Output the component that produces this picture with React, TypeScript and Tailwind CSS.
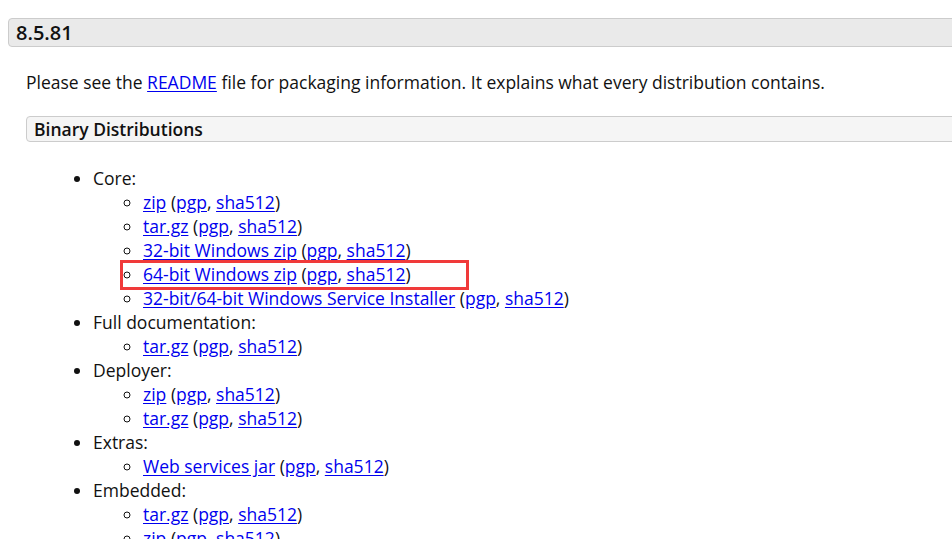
const link = "text-[#0000ee] underline underline-offset-2";

function Sigs() {
    return (
        <>
            {" "}(<a className={link}>pgp</a>, <a className={link}>sha512</a>)
        </>
    );
}

function Item({ label, boxed = false }: { label: string; boxed?: boolean }) {
    return (
        <li className="relative">
            <a className={link}>{label}</a>
            <Sigs />
            {boxed && (
                <span className="absolute left-[-23px] top-[-2px] w-[349px] h-[30px] border-[3px] border-[#f03a3a] pointer-events-none" />
            )}
        </li>
    );
}

const groups: { title: string; items: { label: string; boxed?: boolean }[] }[] = [
    {
        title: "Core:",
        items: [
            { label: "zip" },
            { label: "tar.gz" },
            { label: "32-bit Windows zip" },
            { label: "64-bit Windows zip", boxed: true },
            { label: "32-bit/64-bit Windows Service Installer" },
        ],
    },
    { title: "Full documentation:", items: [{ label: "tar.gz" }] },
    { title: "Deployer:", items: [{ label: "zip" }, { label: "tar.gz" }] },
    { title: "Extras:", items: [{ label: "Web services jar" }] },
    { title: "Embedded:", items: [{ label: "tar.gz" }, { label: "zip" }] },
];

export default function App() {
    return (
        <div
            className="w-[952px] h-[539px] overflow-hidden bg-white text-[#111] text-[17.5px] leading-[24px]"
            style={{ fontFamily: '"Open Sans", "Noto Sans", sans-serif' }}
        >
            <div className="pl-2 pt-[18px]">
                <h3 className="h-[29px] -mr-4 border border-[#cccccc] rounded-l-[4px] bg-[#eaeaea] pl-[7px] text-[20px] font-semibold leading-[27px] text-[#111]">
                    8.5.81
                </h3>
                <div className="ml-[18px]">
                    <p className="mt-[23px]">
                        Please see the <a className={link}>README</a> file for packaging information. It explains what every distribution contains.
                    </p>
                    <h4 className="mt-[22px] h-[26px] -mr-4 border border-[#cccccc] rounded-l-[4px] bg-[#f5f5f5] pl-[7px] text-[17.5px] font-semibold leading-[24px] text-[#111]">
                        Binary Distributions
                    </h4>
                    <ul className="mt-6 pl-[67px] list-disc">
                        {groups.map((g) => (
                            <li key={g.title}>
                                {g.title}
                                <ul className="pl-[50px] list-[circle]">
                                    {g.items.map((it, i) => (
                                        <Item key={i} label={it.label} boxed={it.boxed} />
                                    ))}
                                </ul>
                            </li>
                        ))}
                    </ul>
                </div>
            </div>
        </div>
    );
}
